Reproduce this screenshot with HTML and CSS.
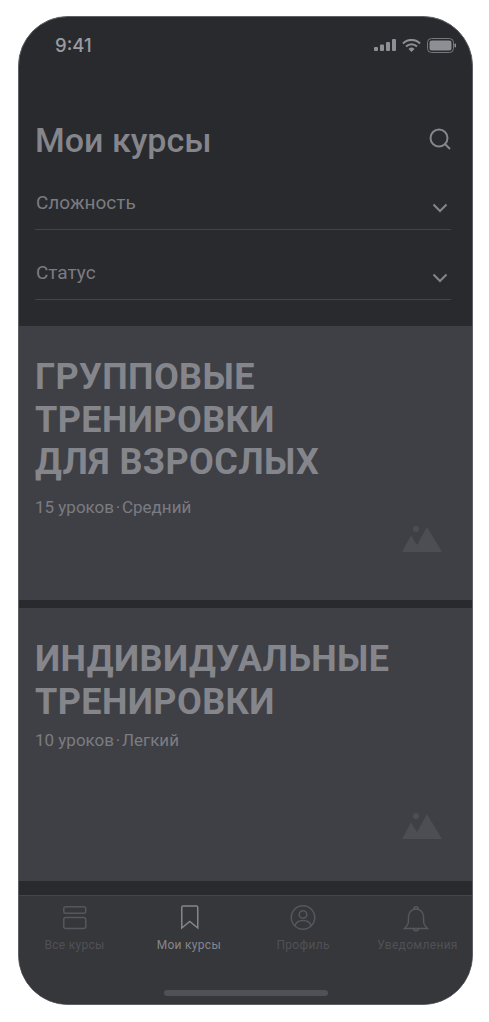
FILE: index.html
```html
<!DOCTYPE html>
<html lang="ru">
<head>
    <meta charset="UTF-8" />
    <meta name="viewport" content="width=device-width, initial-scale=1.0" />
    <title>Мои курсы</title>
    <link rel="stylesheet" href="styles.css">
</head>
<body>
    <div class="phone">
        <div class="status-bar">
            <span class="time">9:41</span>
            <div class="status-icons">
                <svg width="22" height="12" viewBox="0 0 22 12"><rect x="0" y="8" width="4" height="4" rx="1"/><rect x="6" y="5.500" width="4" height="6.500" rx="1"/><rect x="12" y="3" width="4" height="9" rx="1"/><rect x="18" y="0" width="4" height="12" rx="1"/></svg>
                <svg width="19" height="13" viewBox="0 0 19 13"><path class="wave" d="M1 4.500a12 12 0 0 1 17 0M4 7.500a7.800 7.800 0 0 1 11 0"/><path d="M9.500 13l-3-3a4.300 4.300 0 0 1 6 0z"/></svg>
                <svg width="29" height="15" viewBox="0 0 29 15"><rect class="shell" x="0.500" y="0.500" width="26" height="14" rx="4"/><rect x="2.500" y="2.500" width="22" height="10" rx="2.200"/><rect x="27.500" y="5.500" width="1.500" height="4" rx="0.700"/></svg>
            </div>
        </div>

        <div class="page-head">
            <h1>Мои курсы</h1>
            <svg class="search" width="24" height="24" viewBox="0 0 24 24"><circle cx="11" cy="11" r="8.500"/><path d="M17.200 17.200L22 22"/></svg>
        </div>

        <div class="filter">
            <span>Сложность</span>
            <svg width="16" height="10" viewBox="0 0 16 10"><path d="M1.500 1.500L8 8l6.500-6.500"/></svg>
        </div>
        <div class="filter">
            <span>Статус</span>
            <svg width="16" height="10" viewBox="0 0 16 10"><path d="M1.500 1.500L8 8l6.500-6.500"/></svg>
        </div>

        <div class="course first">
            <h2>ГРУППОВЫЕ<br>ТРЕНИРОВКИ<br>ДЛЯ ВЗРОСЛЫХ</h2>
            <p>15 уроков&#8202;·&#8202;Средний</p>
            <svg class="picture" width="40" height="26" viewBox="0 0 40 26"><circle cx="14" cy="3" r="3"/><path d="M0 26L9 9.500L15 19L25 1L40 26z"/></svg>
        </div>
        <div class="course second">
            <h2>ИНДИВИДУАЛЬНЫЕ<br>ТРЕНИРОВКИ</h2>
            <p>10 уроков&#8202;·&#8202;Легкий</p>
            <svg class="picture" width="40" height="26" viewBox="0 0 40 26"><circle cx="14" cy="3" r="3"/><path d="M0 26L9 9.500L15 19L25 1L40 26z"/></svg>
        </div>

        <nav class="tabbar">
            <div class="tab">
                <svg width="28" height="28" viewBox="0 0 28 28"><rect x="2.750" y="2.750" width="22" height="6.500" rx="2"/><rect x="2.750" y="13.500" width="22" height="11" rx="2"/></svg>
                <span>Все курсы</span>
            </div>
            <div class="tab active">
                <svg width="28" height="28" viewBox="0 0 28 28"><path d="M6.750 3.500a1.500 1.500 0 0 1 1.500-1.500h13a1.500 1.500 0 0 1 1.500 1.500v20.500l-8-6.500-8 6.500z"/></svg>
                <span>Мои курсы</span>
            </div>
            <div class="tab">
                <svg width="28" height="28" viewBox="0 0 28 28"><circle cx="14" cy="13.500" r="11.750"/><circle cx="14" cy="10.500" r="3.800"/><path d="M6 22c.8-3.800 4-5.500 8-5.500s7.200 1.700 8 5.500"/></svg>
                <span>Профиль</span>
            </div>
            <div class="tab">
                <svg width="28" height="28" viewBox="0 0 28 28"><path d="M1.500 24.500c2.500-2.500 4-4 4-8.500v-3.500a7.500 7.500 0 0 1 15 0V16c0 4.500 1.500 6 4 8.500z"/><path d="M10.800 5a2.200 2.200 0 0 1 4.400 0M10.500 24.500c0 3 5 3 5 0"/></svg>
                <span>Уведомления</span>
            </div>
        </nav>
        <div class="home-bar"></div>
    </div>
</body>
</html>
```

FILE: styles.css
```css
body {
    margin: 0;
    background-color: #fff;
    font-family: Roboto, sans-serif;
}
.phone {
    position: relative;
    box-sizing: border-box;
    width: 455px;
    height: 989px;
    margin: 16px 0 0 18px;
    border: 1px solid #5f6065;
    border-radius: 50px;
    overflow: hidden;
    background-color: #292a2e;
    color: #8b8c92;
}
.status-bar {
    display: flex;
    justify-content: space-between;
    align-items: center;
    height: 20px;
    padding: 18px 16px 0 36px;
}
.time {
    font-size: 18.500px;
    font-weight: 500;
    color: #9a9b9f;
    font-family: Inter, sans-serif;
}
.status-icons {
    display: flex;
    align-items: center;
    gap: 6px;
}
.status-icons svg {
    fill: #8e8f94;
}
.status-icons .wave {
    fill: none;
    stroke: #8e8f94;
    stroke-width: 2;
}
.status-icons .shell {
    fill: none;
    stroke: #77787d;
    stroke-width: 1;
}
.page-head {
    display: flex;
    justify-content: space-between;
    align-items: center;
    padding: 64px 20px 0 16px;
    margin-bottom: 20px;
}
h1 {
    margin: 0;
    font-size: 34px;
    line-height: 42px;
    font-weight: 500;
    color: #85868c;
}
.search {
    margin-top: -2px;
    fill: none;
    stroke: #85868c;
    stroke-width: 2;
}
.filter {
    display: flex;
    justify-content: space-between;
    margin: 0 21px 0 16px;
    height: 37px;
    border-bottom: 1px solid #43444a;
    padding: 11px 1px 0 1px;
    font-size: 19px;
    line-height: 22px;
    color: #7b7c81;
}
.filter + .filter {
    margin-top: 21px;
}
.filter svg {
    margin: 11px 2px 0 0;
    fill: none;
    stroke: #85868c;
    stroke-width: 2;
}
.course {
    position: relative;
    background-color: #3f4045;
    padding: 30px 16px 0;
    box-sizing: border-box;
}
.first {
    height: 274px;
    margin-top: 26px;
}
.second {
    height: 273px;
    margin-top: 8px;
}
h2 {
    margin: 0;
    font-size: 36px;
    line-height: 42.500px;
    font-weight: 700;
    color: #85868c;
    letter-spacing: 0.400px;
}
.course p {
    margin: 6px 0 0;
    font-size: 17px;
    line-height: 22px;
    color: #7b7c81;
}
.first p {
    margin-top: 12px;
}
.picture {
    position: absolute;
    right: 30px;
    bottom: 48px;
    fill: #4d4e53;
}
.second .picture {
    bottom: 42px;
}
.tabbar {
    position: absolute;
    left: 0;
    right: 0;
    top: 878px;
    bottom: 0;
    display: grid;
    grid-template-columns: repeat(4, 114.300px);
    justify-content: center;
    align-items: start;
    padding: 8px 0 0 1px;
    background-color: #36373b;
    border-top: 1px solid #43444a;
}
.tab {
    display: flex;
    flex-direction: column;
    align-items: center;
    gap: 5px;
    font-size: 12px;
    line-height: 16px;
    letter-spacing: 0.300px;
    color: #505156;
}
.tab svg {
    fill: none;
    stroke: #56575c;
    stroke-width: 1.500;
}
.tab.active {
    color: #85868c;
}
.tab.active svg {
    stroke: #85868c;
}
.home-bar {
    position: absolute;
    left: 145px;
    bottom: 8px;
    width: 164px;
    height: 6px;
    border-radius: 3px;
    background-color: #505156;
}
```
